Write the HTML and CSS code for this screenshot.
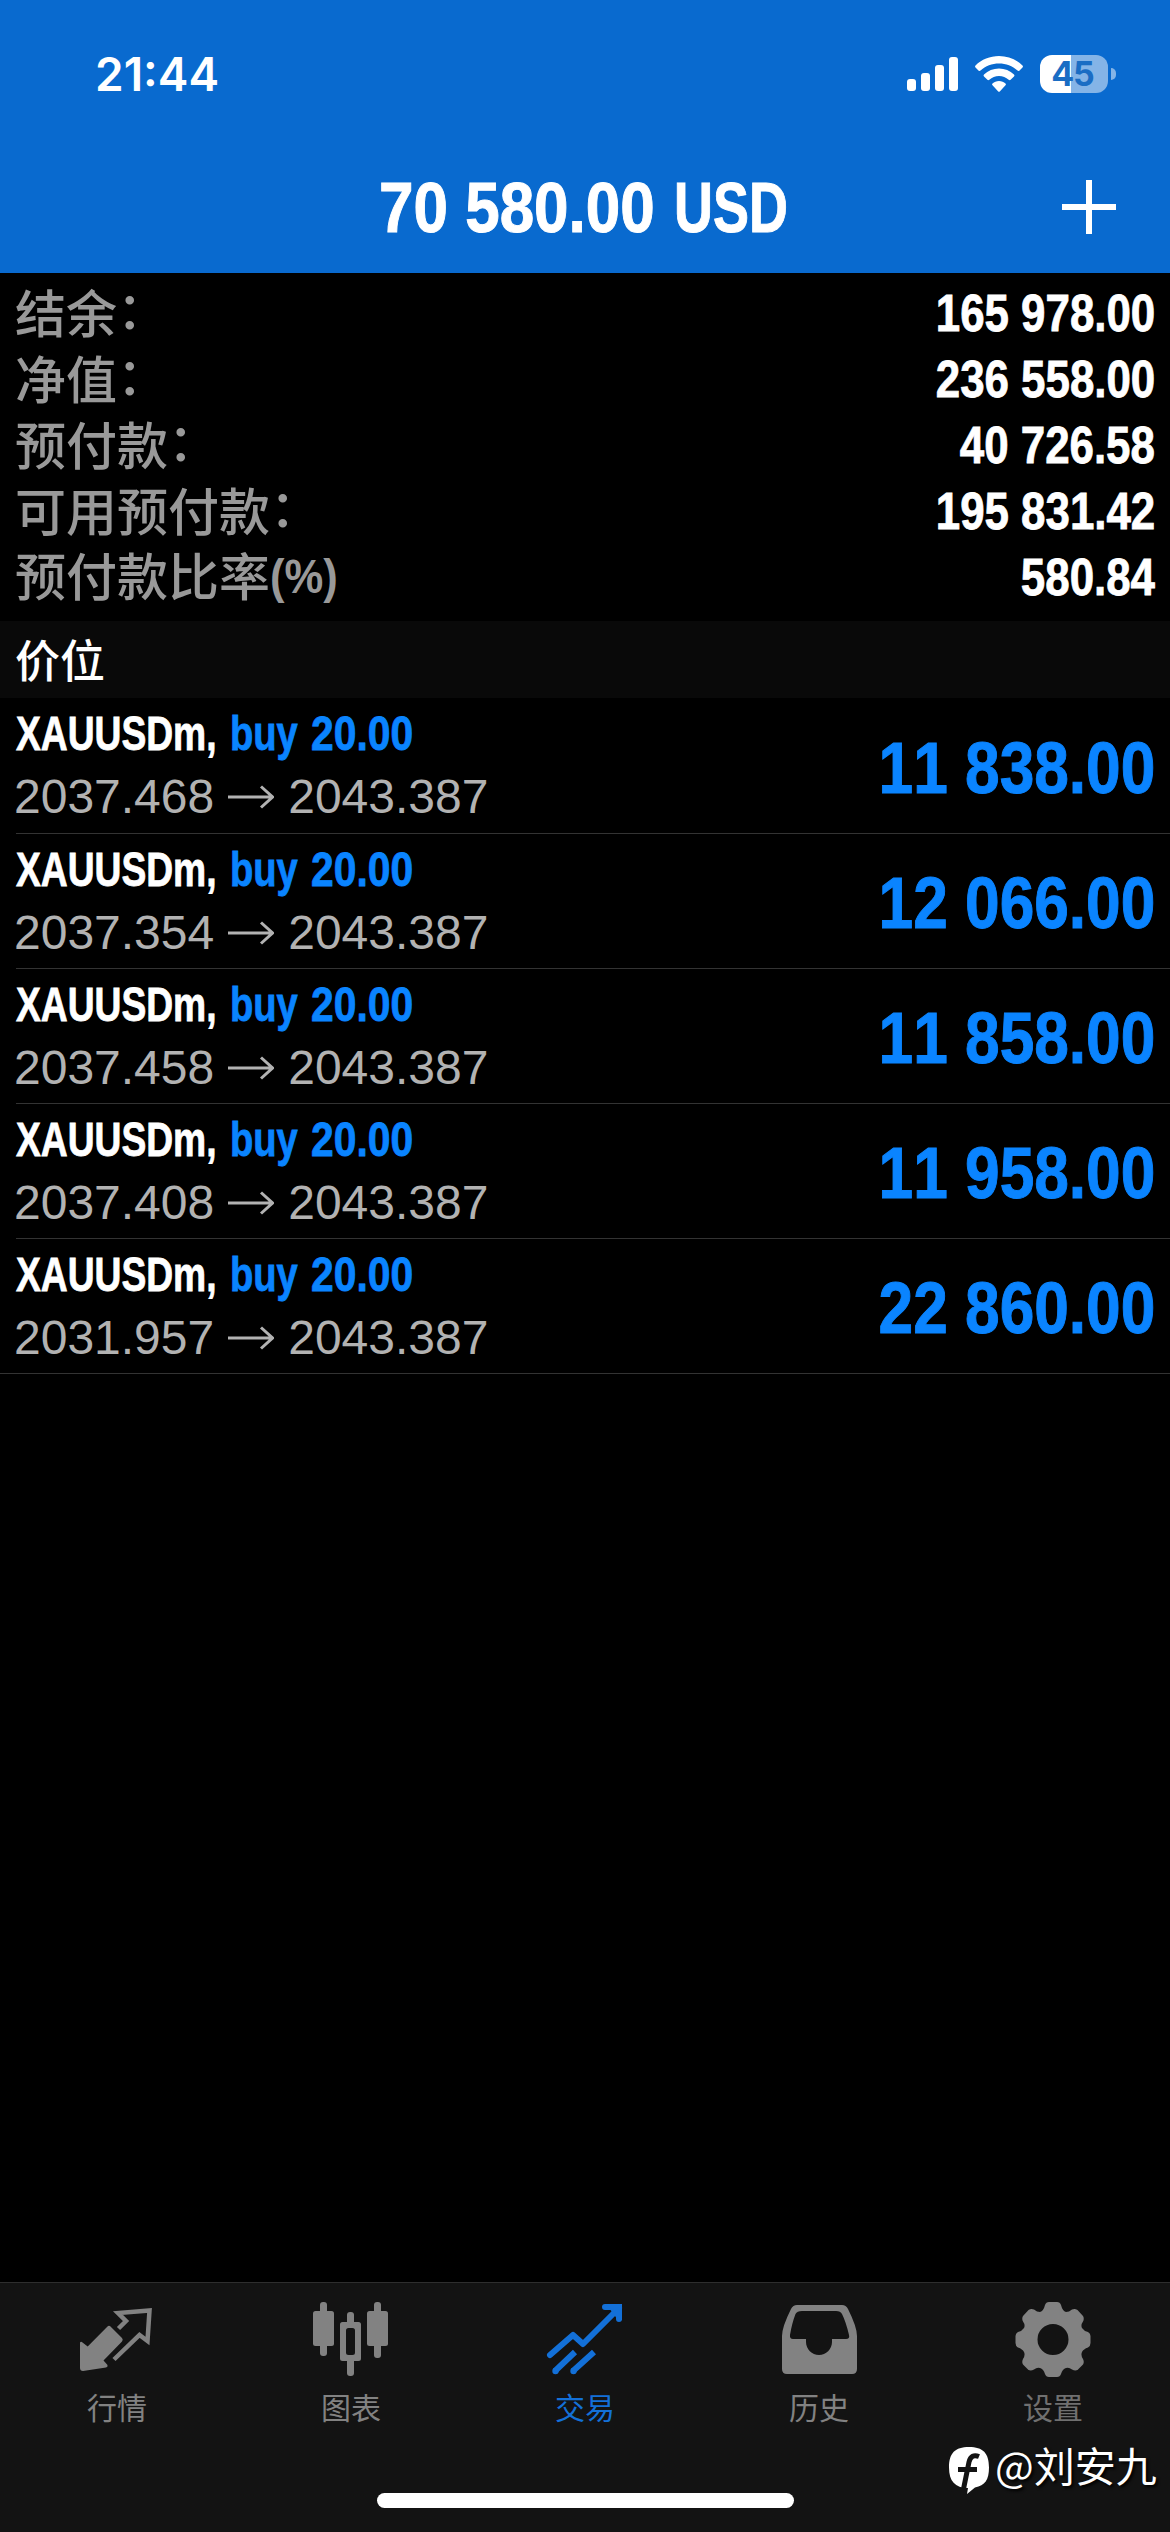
FILE: index.html
```html
<!DOCTYPE html>
<html lang="zh-CN">
<head>
<meta charset="utf-8">
<title>交易</title>
<link rel="stylesheet" href="styles.css">
</head>
<body>
<div class="app">
  <header class="header">
    <div class="status">
      <span class="time">21:44</span>
      <div class="indicators">
        <svg class="signal" viewBox="0 0 51 34"><rect x="0" y="22" width="9" height="12" rx="3"/><rect x="14" y="16" width="9" height="18" rx="3"/><rect x="28" y="8" width="9" height="26" rx="3"/><rect x="42" y="0" width="9" height="34" rx="3"/></svg>
        <svg class="wifi" viewBox="0 0 48 36"><path d="M24 0C33 0 41.500 3.500 47.500 9.500Q48.400 10.500 47.500 11.500L44.300 14.700Q43.500 15.500 42.500 14.600C37.500 10 31 7.500 24 7.500S10.500 10 5.500 14.600Q4.500 15.500 3.700 14.700L.5 11.500Q-.4 10.500 .5 9.500C6.500 3.500 15 0 24 0Z"/><path d="M24 12.500C29.800 12.500 35 14.700 39 18.400Q40 19.400 39 20.400L35.600 23.800Q34.700 24.600 33.700 23.800C31 21.500 27.700 20 24 20S17 21.500 14.300 23.800Q13.300 24.600 12.400 23.800L9 20.400Q8 19.400 9 18.400C13 14.700 18.200 12.500 24 12.500Z"/><path d="M24 25C26.600 25 28.800 25.900 30.500 27.400Q31.400 28.300 30.500 29.200L25 35.300Q24 36.300 23 35.300L17.500 29.200Q16.600 28.300 17.500 27.400C19.200 25.900 21.400 25 24 25Z"/></svg>
        <div class="battery"><span class="charge">45</span><i class="nub"></i></div>
      </div>
    </div>
    <div class="titlebar">
      <h1 class="title"><span class="title-sum">70 580.00</span><span class="title-cur">USD</span></h1>
      <svg class="plus" viewBox="0 0 54 54"><path d="M27 0V54M0 27H54"/></svg>
    </div>
  </header>

  <section class="summary">
    <div class="sum-row"><span>结余<i>：</i></span><b>165 978.00</b></div>
    <div class="sum-row"><span>净值<i>：</i></span><b>236 558.00</b></div>
    <div class="sum-row"><span>预付款<i>：</i></span><b>40 726.58</b></div>
    <div class="sum-row"><span>可用预付款<i>：</i></span><b>195 831.42</b></div>
    <div class="sum-row"><span>预付款比率<em>(%)</em></span><b>580.84</b></div>
  </section>

  <h2 class="band">价位</h2>

  <main class="positions">
    <div class="pos"><div class="info"><div class="deal"><span class="sym">XAUUSDm,</span><span class="side">buy</span><span class="lots">20.00</span></div><div class="prices"><span>2037.468</span><svg class="to" viewBox="0 0 46 24"><path d="M0 12H44M33 1.500L44.500 12L33 22.500"/></svg><span>2043.387</span></div></div><div class="profit">11 838.00</div></div>
    <div class="pos"><div class="info"><div class="deal"><span class="sym">XAUUSDm,</span><span class="side">buy</span><span class="lots">20.00</span></div><div class="prices"><span>2037.354</span><svg class="to" viewBox="0 0 46 24"><path d="M0 12H44M33 1.500L44.500 12L33 22.500"/></svg><span>2043.387</span></div></div><div class="profit">12 066.00</div></div>
    <div class="pos"><div class="info"><div class="deal"><span class="sym">XAUUSDm,</span><span class="side">buy</span><span class="lots">20.00</span></div><div class="prices"><span>2037.458</span><svg class="to" viewBox="0 0 46 24"><path d="M0 12H44M33 1.500L44.500 12L33 22.500"/></svg><span>2043.387</span></div></div><div class="profit">11 858.00</div></div>
    <div class="pos"><div class="info"><div class="deal"><span class="sym">XAUUSDm,</span><span class="side">buy</span><span class="lots">20.00</span></div><div class="prices"><span>2037.408</span><svg class="to" viewBox="0 0 46 24"><path d="M0 12H44M33 1.500L44.500 12L33 22.500"/></svg><span>2043.387</span></div></div><div class="profit">11 958.00</div></div>
    <div class="pos"><div class="info"><div class="deal"><span class="sym">XAUUSDm,</span><span class="side">buy</span><span class="lots">20.00</span></div><div class="prices"><span>2031.957</span><svg class="to" viewBox="0 0 46 24"><path d="M0 12H44M33 1.500L44.500 12L33 22.500"/></svg><span>2043.387</span></div></div><div class="profit">22 860.00</div></div>
  </main>

  <footer class="footer">
    <nav class="tabs">
      <div class="tab">
        <svg class="icon" viewBox="0 0 78 78"><path fill="currentColor" d="M29.500 25.500Q31 24 32.500 25.500L44 37Q45.500 38.500 44 40.500L25.500 59.500L29.500 64Q30 66 28 66.500L5 70Q2 70 2 67V41.500Q3 40 4.500 41.500L9.700 45.500Z"/><path fill="none" stroke="currentColor" stroke-width="4.500" d="M40.500 27.500L48 20L40 12L71.500 9.500L69.500 40L61.500 34L36 58.500" /></svg>
        <span>行情</span>
      </div>
      <div class="tab">
        <svg class="icon" viewBox="0 0 78 78"><g fill="currentColor"><rect x="1" y="10" width="21" height="35" rx="2.500"/><rect x="8" y="1" width="7" height="54" rx="3"/><rect x="55" y="10" width="21" height="35" rx="2.500"/><rect x="62" y="1" width="7" height="56" rx="3"/><rect x="35" y="11" width="7" height="16" rx="3"/><rect x="35" y="55" width="7" height="20" rx="3"/><path fill-rule="evenodd" d="M30.500 21H46.500Q49 21 49 23.500V57.500Q49 60 46.500 60H30.500Q28 60 28 57.500V23.500Q28 21 30.500 21ZM36.500 27Q34 27 34 29.500V51.500Q34 54 36.500 54H40.500Q43 54 43 51.500V29.500Q43 27 40.500 27Z"/></g></svg>
        <span>图表</span>
      </div>
      <div class="tab active">
        <svg class="icon" viewBox="0 0 78 78"><g fill="none" stroke="currentColor" stroke-width="6" stroke-linejoin="round" stroke-linecap="round"><path d="M4 54L27 34L37 43L73 7M59 6H73V18"/><path stroke-linecap="butt" d="M9 70L29 51M27 70L48 51"/></g><g fill="currentColor"><path d="M60 3H76V19H72Z"/><circle cx="9.500" cy="70" r="3.200"/><circle cx="27.500" cy="70" r="3.200"/></g></svg>
        <span>交易</span>
      </div>
      <div class="tab">
        <svg class="icon" viewBox="0 0 78 78"><path fill="currentColor" fill-rule="evenodd" d="M17 4H62Q66 4 68 8Q77 26 77 35V68Q77 73 72 73H7Q2 73 2 68V35Q2 26 11 8Q13 4 17 4ZM22 10Q17 10 15.500 13Q12 22 10 34Q9.500 38 13 38H26V41C26 48 32 54 39 54S52 48 52 41V38H66Q70 38 69 34Q66 21 62 13Q60.500 10 56 10Z"/></svg>
        <span>历史</span>
      </div>
      <div class="tab settings">
        <svg class="icon" viewBox="0 0 78 78"><path fill="currentColor" fill-rule="evenodd" d="M35 1H43Q46 1 47 4Q48.500 10 52 11Q55 11 58 8.500Q61 7.500 63.500 9L69 15Q70.500 17.500 69 20.500Q66.500 24 68 27Q70 30 74 31Q76.500 32.500 76.500 35V42Q76.500 45 74 46.500Q69.500 48 68 51Q66.500 54 69 58Q70.500 61 69 63.500L63.500 69Q61 70 58 68.500Q55 66 52 67Q48.500 68 47 73Q46 76 43 76H35Q32 76 31 73Q29.500 68 26 67Q23 66 20 68.500Q17 70 14.500 69L9 63.500Q7.500 61 9 58Q11.500 54 10 51Q8.500 48 4 46.500Q1.500 45 1.500 42V35Q1.500 32.500 4 31Q8 30 10 27Q11.500 24 9 20.500Q7.500 17.500 9 15L14.500 9Q17 7.500 20 8.500Q23 11 26 11Q29.500 10 31 4Q32 1 35 1ZM39 23A15.500 15.500 0 1 0 39 54A15.500 15.500 0 1 0 39 23Z"/></svg>
        <span>设置</span>
      </div>
    </nav>
    <div class="home"></div>
    <div class="watermark">
      <svg class="mark" viewBox="0 0 42 48"><path fill="#fff" d="M21 0C35 0 41 6 41 20.500C41 33 37 38.500 27 40.500L19 47L20 41C7 41 1 34 1 20.500C1 6 7 0 21 0Z"/><path fill="none" stroke="#131313" stroke-width="5" d="M31 9.500C26 7.500 22.500 9 21 15L15.500 42M10 22.500H29"/></svg>
      <span>@刘安九</span>
    </div>
  </footer>
</div>
</body>
</html>
```

FILE: styles.css
```css
* { box-sizing: border-box; margin: 0; padding: 0; }
body { background: #000; font-family: "Liberation Sans", "Noto Sans CJK SC", sans-serif; font-kerning: none; }
.app { width: 1170px; height: 2532px; display: flex; flex-direction: column; background: #000; color: #fff; overflow: hidden; }

.header { height: 273px; background: #096acf; flex: none; }
.status { height: 140px; padding: 8px 55px 0 95px; display: flex; justify-content: space-between; align-items: center; }
.time { font: 600 46px/60px Inter, sans-serif; }
.indicators { display: flex; align-items: center; }
.signal { width: 51px; height: 34px; fill: #fff; margin-right: 17px; }
.wifi { width: 48px; height: 36px; fill: #fff; margin-right: 17px; }
.battery { position: relative; width: 68px; height: 38px; margin-right: 7px; border-radius: 12px; background: linear-gradient(90deg, #fff 31px, #84b4e7 31px); display: flex; justify-content: center; align-items: center; }
.charge { font: 700 34px/38px Inter, sans-serif; color: #1a6dc4; letter-spacing: -1px; padding-right: 3px; }
.nub { position: absolute; left: 71px; top: 13px; width: 5px; height: 12px; border-radius: 0 5px 5px 0; background: #84b4e7; }
.titlebar { height: 133px; padding: 0 54px 0 379px; display: flex; justify-content: space-between; align-items: center; }
.title { display: flex; padding-top: 3px; font-size: 71px; line-height: 80px; font-weight: 700; white-space: nowrap; -webkit-text-stroke: 1px; }
.title-sum { width: 295px; transform: scaleX(.873); transform-origin: left; }
.title-cur { width: 114px; transform: scaleX(.76); transform-origin: left; }
.plus { width: 54px; height: 54px; fill: none; stroke: #fff; stroke-width: 6; }

.summary { height: 348px; padding: 6px 15px 0; flex: none; }
.sum-row { height: 66px; display: flex; justify-content: space-between; align-items: center; }
.sum-row span { padding-bottom: 1px; font: 500 51px/65px "Noto Sans CJK SC", sans-serif; color: #999; white-space: nowrap; }
.sum-row i { display: inline-block; font-style: normal; transform: translateY(-4px); }
.sum-row em { display: inline-block; font: 700 49px/60px "Liberation Sans", sans-serif; transform: translateY(-3px) scaleX(.89); transform-origin: left; }
.sum-row b { padding-top: 4px; font-size: 51px; line-height: 62px; transform: scaleX(.86); transform-origin: right; -webkit-text-stroke: .8px; }

.band { height: 77px; padding-left: 15px; background: #090909; font: 500 45px/76px "Noto Sans CJK SC", sans-serif; flex: none; }

.positions { flex: 1; }
.pos { height: 135px; margin-left: 16px; padding-right: 15px; display: flex; justify-content: space-between; align-items: center; border-bottom: 1px solid #333; }
.pos:first-child { height: 136px; }
.pos:last-child { margin-left: 0; padding-left: 16px; }
.info { height: 135px; padding-top: 8px; }
.deal { display: flex; height: 61px; font-size: 48px; line-height: 56px; font-weight: 700; -webkit-text-stroke: .8px; }
.deal span { transform-origin: left; white-space: nowrap; }
.sym { width: 214px; transform: scaleX(.775); }
.side { width: 81px; transform: scaleX(.795); color: #0a84ff; }
.lots { transform: scaleX(.85); color: #0a84ff; }
.prices { display: flex; align-items: center; gap: 14px; margin-left: -2px; font-size: 48px; line-height: 60px; color: #b2b2b2; }
.to { width: 46px; height: 24px; fill: none; stroke: #b2b2b2; stroke-width: 3; }
.profit { padding-top: 4px; font-size: 72px; line-height: 80px; font-weight: 700; color: #0a84ff; transform: scaleX(.864); transform-origin: right; -webkit-text-stroke: 1px; }

.footer { position: relative; height: 250px; background: #131313; border-top: 1px solid #2e2e2e; flex: none; }
.tabs { display: flex; }
.tab { width: 234px; padding-top: 18px; display: flex; flex-direction: column; align-items: center; color: #828282; }
.tab span { margin-top: 7px; font: 400 30px/40px "Noto Sans CJK SC", sans-serif; }
.tab.active { color: #1370d8; }
.tab.settings span { color: #707070; }
.icon { width: 78px; height: 78px; }
.home { position: absolute; left: 377px; bottom: 24px; width: 417px; height: 15px; border-radius: 8px; background: #fff; }
.watermark { position: absolute; left: 948px; top: 150px; display: flex; align-items: center; font: 400 41px/56px "Noto Sans CJK SC", sans-serif; white-space: nowrap; text-shadow: 2px 2px 3px #000; }
.mark { width: 42px; height: 48px; margin-right: 5px; margin-top: 14px; }
```
